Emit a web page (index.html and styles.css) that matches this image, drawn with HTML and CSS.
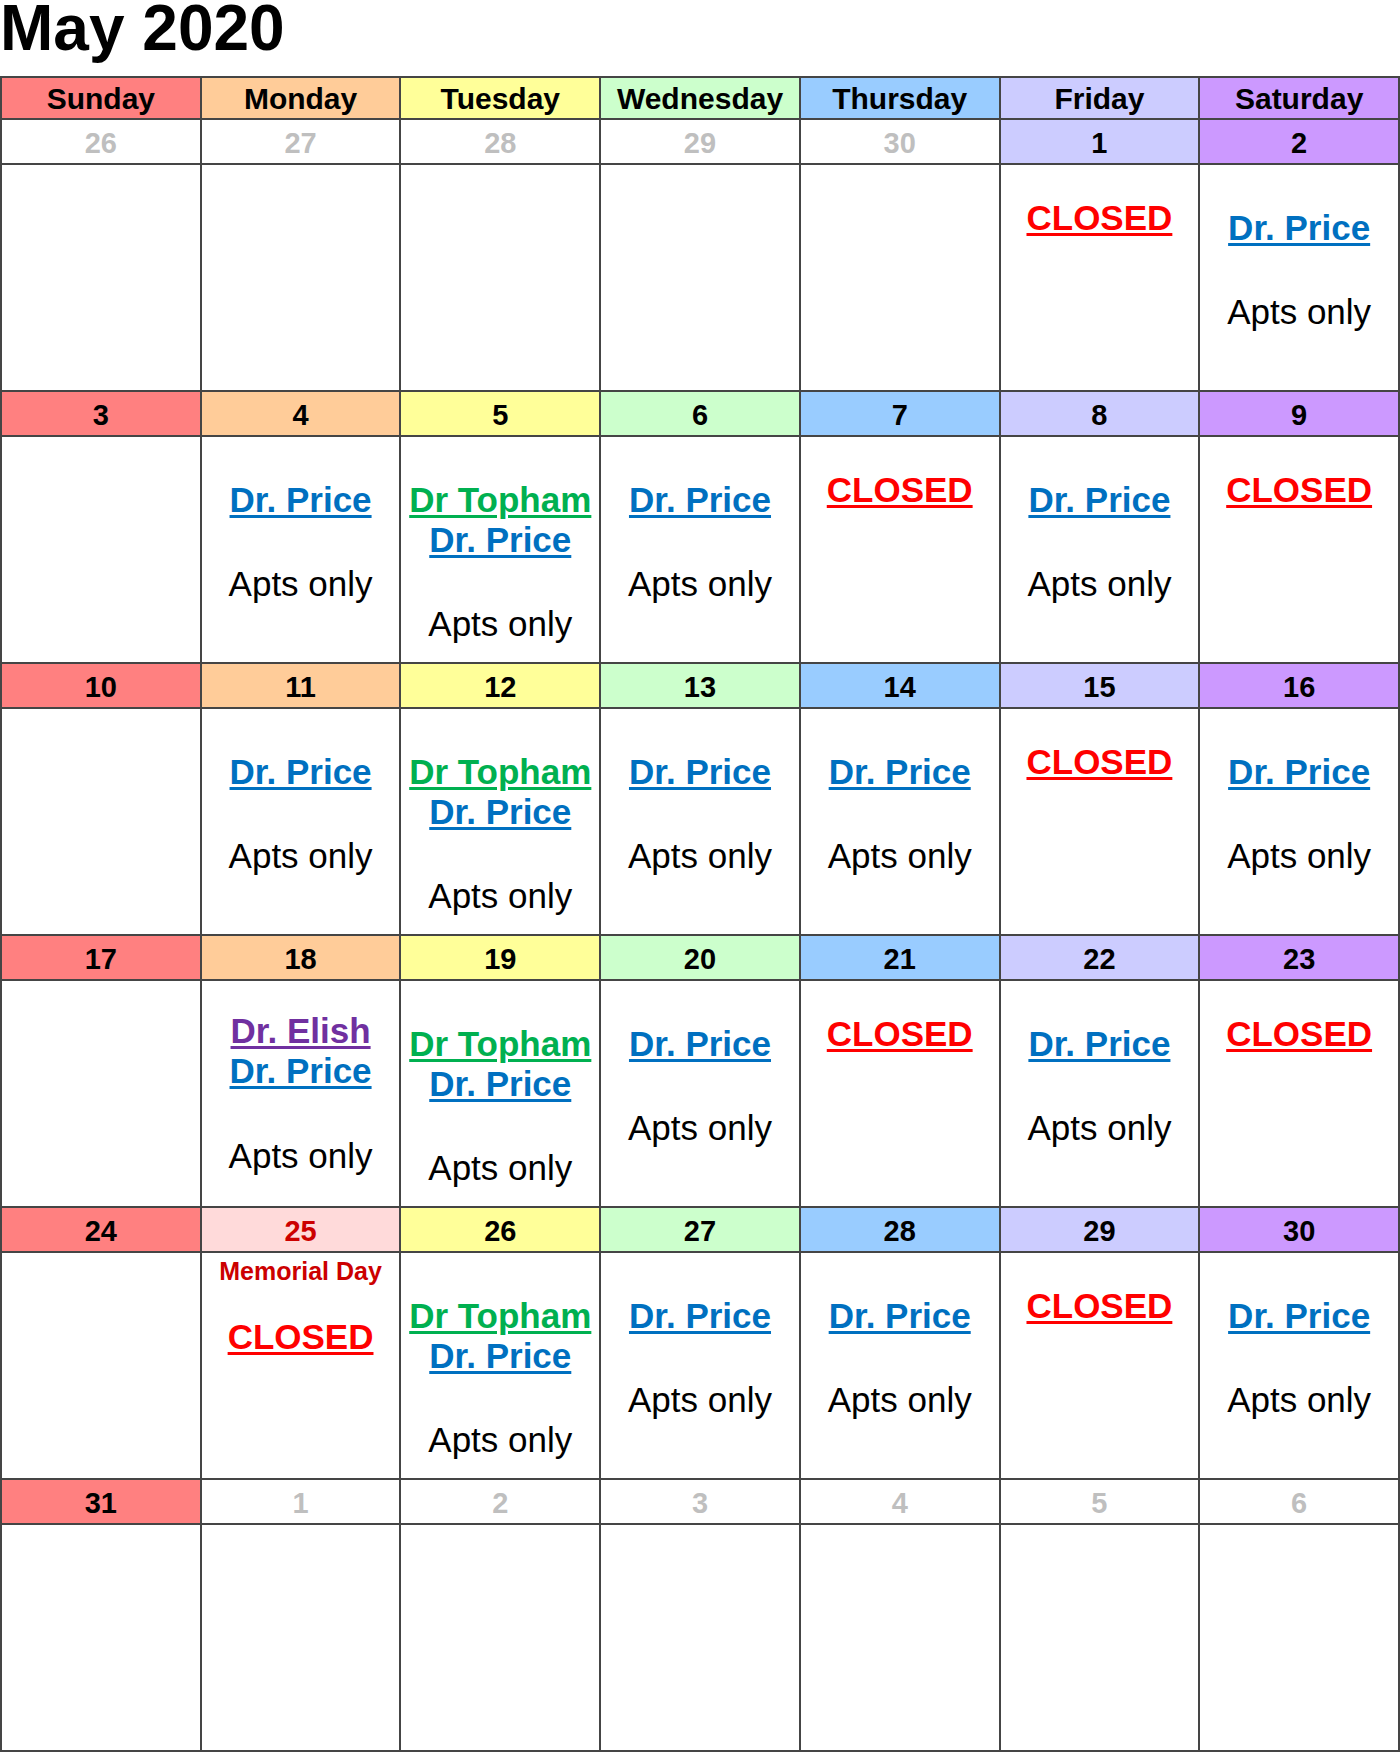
FILE: index.html
```html
<!DOCTYPE html>
<html lang="en">
<head>
<meta charset="utf-8">
<title>May 2020</title>
<link rel="stylesheet" href="styles.css">
</head>
<body>
<h1 class="title">May 2020</h1>
<div class="cal">
  <div class="hd sun">Sunday</div>
  <div class="hd mon">Monday</div>
  <div class="hd tue">Tuesday</div>
  <div class="hd wed">Wednesday</div>
  <div class="hd thu">Thursday</div>
  <div class="hd fri">Friday</div>
  <div class="hd sat">Saturday</div>

  <!-- week 1 -->
  <div class="dt other">26</div>
  <div class="dt other">27</div>
  <div class="dt other">28</div>
  <div class="dt other">29</div>
  <div class="dt other">30</div>
  <div class="dt fri">1</div>
  <div class="dt sat">2</div>
  <div class="cell"></div>
  <div class="cell"></div>
  <div class="cell"></div>
  <div class="cell"></div>
  <div class="cell"></div>
  <div class="cell closed-cell"><span class="ln closed">CLOSED</span></div>
  <div class="cell doc"><span class="ln price">Dr. Price</span><span class="apts">Apts only</span></div>

  <!-- week 2 -->
  <div class="dt sun">3</div>
  <div class="dt mon">4</div>
  <div class="dt tue">5</div>
  <div class="dt wed">6</div>
  <div class="dt thu">7</div>
  <div class="dt fri">8</div>
  <div class="dt sat">9</div>
  <div class="cell"></div>
  <div class="cell doc"><span class="ln price">Dr. Price</span><span class="apts">Apts only</span></div>
  <div class="cell doc"><span class="ln topham">Dr Topham</span><span class="ln price">Dr. Price</span><span class="apts">Apts only</span></div>
  <div class="cell doc"><span class="ln price">Dr. Price</span><span class="apts">Apts only</span></div>
  <div class="cell closed-cell"><span class="ln closed">CLOSED</span></div>
  <div class="cell doc"><span class="ln price">Dr. Price</span><span class="apts">Apts only</span></div>
  <div class="cell closed-cell"><span class="ln closed">CLOSED</span></div>

  <!-- week 3 -->
  <div class="dt sun">10</div>
  <div class="dt mon">11</div>
  <div class="dt tue">12</div>
  <div class="dt wed">13</div>
  <div class="dt thu">14</div>
  <div class="dt fri">15</div>
  <div class="dt sat">16</div>
  <div class="cell"></div>
  <div class="cell doc"><span class="ln price">Dr. Price</span><span class="apts">Apts only</span></div>
  <div class="cell doc"><span class="ln topham">Dr Topham</span><span class="ln price">Dr. Price</span><span class="apts">Apts only</span></div>
  <div class="cell doc"><span class="ln price">Dr. Price</span><span class="apts">Apts only</span></div>
  <div class="cell doc"><span class="ln price">Dr. Price</span><span class="apts">Apts only</span></div>
  <div class="cell closed-cell"><span class="ln closed">CLOSED</span></div>
  <div class="cell doc"><span class="ln price">Dr. Price</span><span class="apts">Apts only</span></div>

  <!-- week 4 -->
  <div class="dt sun">17</div>
  <div class="dt mon">18</div>
  <div class="dt tue">19</div>
  <div class="dt wed">20</div>
  <div class="dt thu">21</div>
  <div class="dt fri">22</div>
  <div class="dt sat">23</div>
  <div class="cell"></div>
  <div class="cell doc-high"><span class="ln elish">Dr. Elish</span><span class="ln price">Dr. Price</span><span class="apts">Apts only</span></div>
  <div class="cell doc"><span class="ln topham">Dr Topham</span><span class="ln price">Dr. Price</span><span class="apts">Apts only</span></div>
  <div class="cell doc"><span class="ln price">Dr. Price</span><span class="apts">Apts only</span></div>
  <div class="cell closed-cell"><span class="ln closed">CLOSED</span></div>
  <div class="cell doc"><span class="ln price">Dr. Price</span><span class="apts">Apts only</span></div>
  <div class="cell closed-cell"><span class="ln closed">CLOSED</span></div>

  <!-- week 5 -->
  <div class="dt sun">24</div>
  <div class="dt holiday">25</div>
  <div class="dt tue">26</div>
  <div class="dt wed">27</div>
  <div class="dt thu">28</div>
  <div class="dt fri">29</div>
  <div class="dt sat">30</div>
  <div class="cell"></div>
  <div class="cell holiday-cell"><span class="memorial">Memorial Day</span><span class="ln closed">CLOSED</span></div>
  <div class="cell doc"><span class="ln topham">Dr Topham</span><span class="ln price">Dr. Price</span><span class="apts">Apts only</span></div>
  <div class="cell doc"><span class="ln price">Dr. Price</span><span class="apts">Apts only</span></div>
  <div class="cell doc"><span class="ln price">Dr. Price</span><span class="apts">Apts only</span></div>
  <div class="cell closed-cell"><span class="ln closed">CLOSED</span></div>
  <div class="cell doc"><span class="ln price">Dr. Price</span><span class="apts">Apts only</span></div>

  <!-- week 6 -->
  <div class="dt sun">31</div>
  <div class="dt other">1</div>
  <div class="dt other">2</div>
  <div class="dt other">3</div>
  <div class="dt other">4</div>
  <div class="dt other">5</div>
  <div class="dt other">6</div>
  <div class="cell"></div>
  <div class="cell"></div>
  <div class="cell"></div>
  <div class="cell"></div>
  <div class="cell"></div>
  <div class="cell"></div>
  <div class="cell"></div>
</div>
</body>
</html>
```

FILE: styles.css
```css
* {
  box-sizing: border-box;
}

html, body {
  margin: 0;
  padding: 0;
  background: #ffffff;
}

body {
  font-family: "Liberation Sans", Arial, sans-serif;
  color: #000000;
  width: 1400px;
}

.title {
  margin: 0 0 20px 0;
  font-size: 64px;
  line-height: 56px;
  font-weight: bold;
}

.cal {
  display: grid;
  grid-template-columns: repeat(7, 1fr);
  width: 1400px;
  border-left: 2px solid #454545;
  border-top: 2px solid #454545;
}

.hd,
.dt,
.cell {
  border-right: 2px solid #454545;
  border-bottom: 2px solid #454545;
  text-align: center;
}

.hd {
  height: 42px;
  padding-top: 1px;
  font-size: 30px;
  line-height: 40px;
  font-weight: bold;
}

.dt {
  height: 45px;
  padding-top: 4px;
  font-size: 29px;
  line-height: 39px;
  font-weight: bold;
}

.sun { background: #ff8080; }
.mon { background: #ffcc99; }
.tue { background: #ffff99; }
.wed { background: #ccffcc; }
.thu { background: #99ccff; }
.fri { background: #ccccff; }
.sat { background: #cc99ff; }

.dt.other {
  background: #ffffff;
  color: #bfbfbf;
}

.dt.holiday {
  background: #ffdada;
  color: #cc0000;
}

.cell {
  height: 227px;
  display: flex;
  flex-direction: column;
  align-items: center;
}

.doc { padding-top: 43px; }
.doc-high { padding-top: 30px; }
.closed-cell { padding-top: 33px; }
.holiday-cell { padding-top: 3px; }

.ln {
  display: block;
  font-size: 35px;
  line-height: 40px;
  font-weight: bold;
  text-decoration: underline;
  text-decoration-thickness: 3px;
  text-underline-offset: 3px;
  white-space: nowrap;
}

.price { color: #0070c0; }
.topham { color: #00b050; }
.elish { color: #7030a0; }
.closed { color: #ff0000; }

.apts {
  display: block;
  margin-top: 44px;
  font-size: 35px;
  line-height: 40px;
  white-space: nowrap;
}

.doc-high .apts {
  margin-top: 45px;
}

.memorial {
  display: block;
  font-size: 25px;
  line-height: 30px;
  font-weight: bold;
  color: #cc0000;
  white-space: nowrap;
}

.holiday-cell .closed {
  margin-top: 31px;
}
```
